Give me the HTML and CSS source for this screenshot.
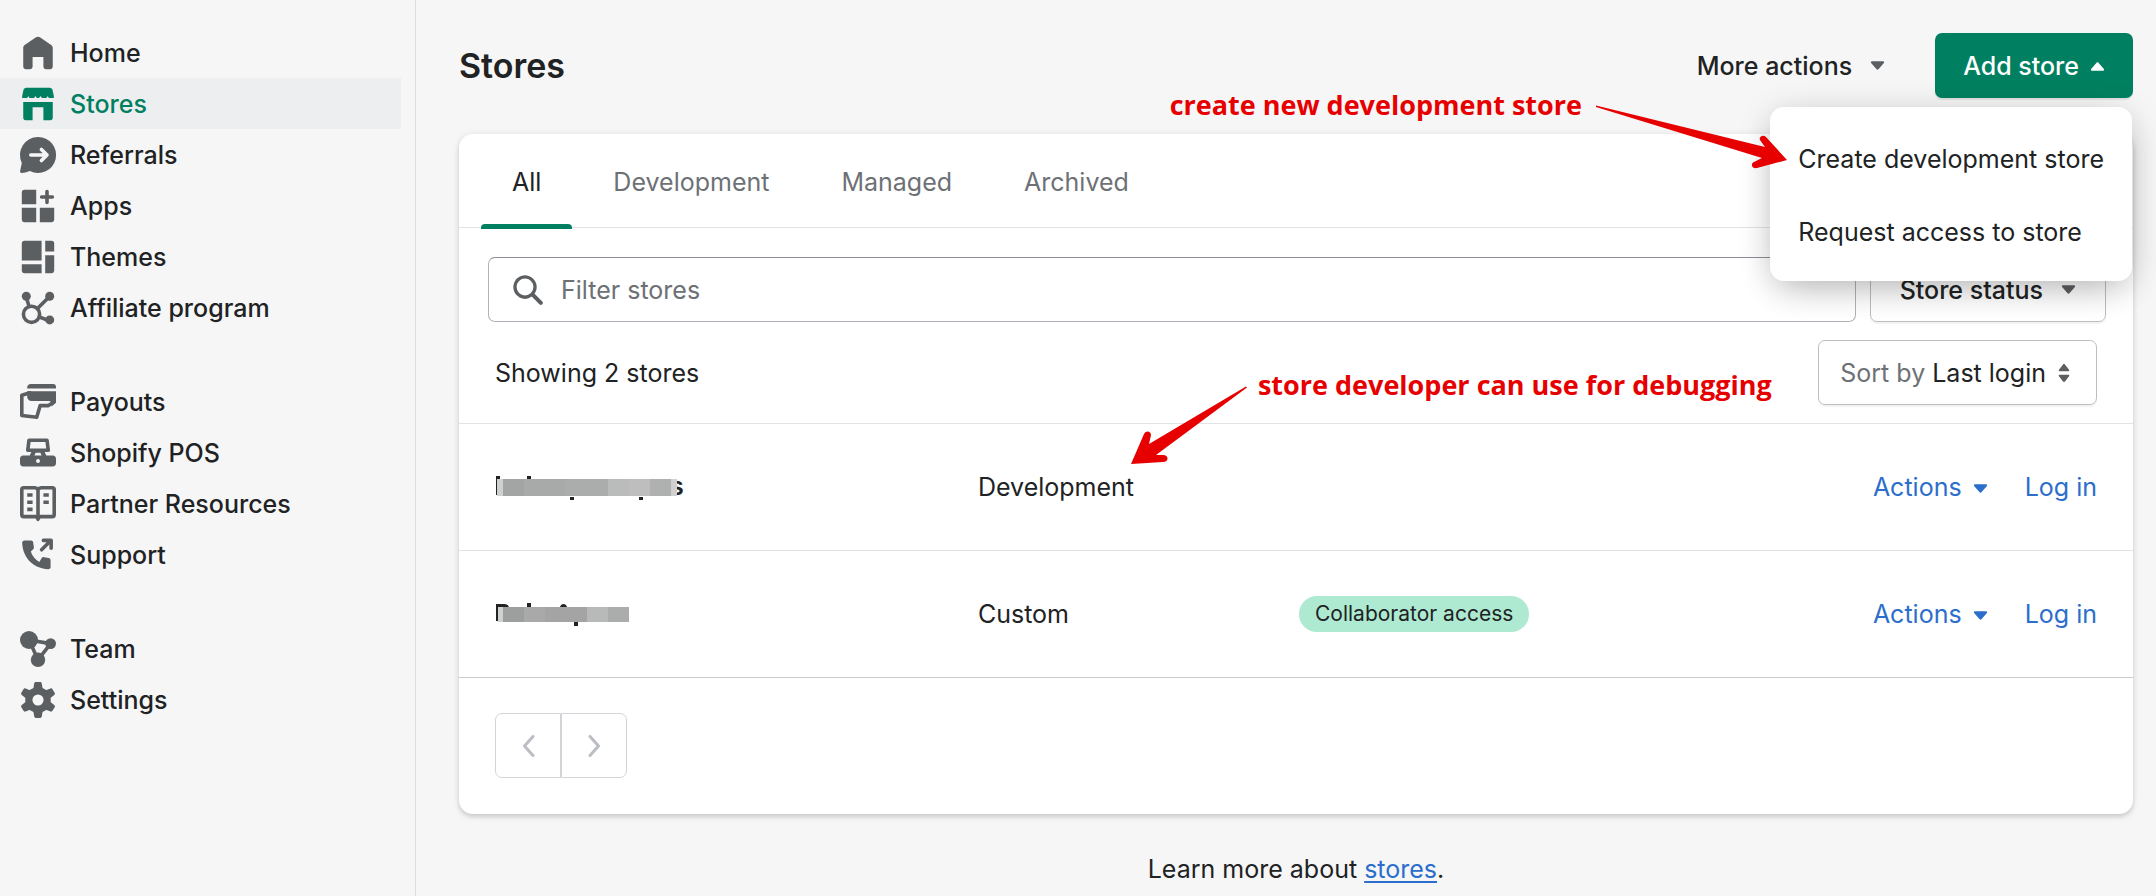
FILE: index.html
```html
<!DOCTYPE html>
<html lang="en">
<head>
  <meta charset="UTF-8">
  <title>Stores</title>
  <link rel="stylesheet" href="styles.css">
</head>
<body>
  <nav class="sidebar">
    <ul>
      <li><a href="#home">
        <svg viewBox="0 0 20 20"><path d="M10 1c.5 0 .9.2 1.300.4l6 4.200c.5.300.9.900.9 1.500v10.400c0 .9-.6 1.500-1.500 1.500h-2.200c-.9 0-1.500-.6-1.500-1.500v-5.300H7v5.300c0 .9-.6 1.500-1.500 1.500H3.300c-.9 0-1.500-.6-1.500-1.500V7.100c0-.6.300-1.200.8-1.500l6.100-4.200c.4-.2.8-.4 1.300-.4z"/></svg>
        Home</a></li>
      <li><a href="#stores" class="active">
        <svg viewBox="0 0 20 20"><path d="M3.500 1h13c.8 0 1.400.5 1.600 1.300l.7 3.200v1.200h-2.200c-.6 0-1-.5-1.200-1.200-.2.700-.7 1.200-1.300 1.200h-1.300c-.6 0-1.100-.5-1.400-1.200-.3.700-.8 1.200-1.400 1.200s-1.100-.5-1.400-1.200c-.3.700-.8 1.200-1.400 1.200H5.900c-.6 0-1.100-.5-1.300-1.200-.2.700-.6 1.200-1.200 1.200H1.200V5.500l.7-3.200C2.100 1.500 2.700 1 3.500 1z"/><path d="M1.800 8.900h16.400v8.800c0 .8-.5 1.300-1.300 1.300H13v-7.200H7V19H3.100c-.8 0-1.300-.5-1.300-1.300z"/></svg>
        Stores</a></li>
      <li><a href="#referrals">
        <svg viewBox="0 0 20 20"><path d="M10 0a10 10 0 1 1-4.500 18.900C3.800 19.500 2.100 20 .9 20 .2 20-.1 19.500.1 18.800l.9-4.400A10 10 0 0 1 10 0z"/><path class="cut" d="M6 10h9M11.900 6.900 15 10l-3.100 3.100"/></svg>
        Referrals</a></li>
      <li><a href="#apps">
        <svg viewBox="0 0 20 20"><path d="M2.500 1H9v8H1V2.500C1 1.600 1.600 1 2.500 1zM1 11h8v8H2.500C1.600 19 1 18.400 1 17.500zM11 11h8v6.500c0 .9-.6 1.500-1.500 1.500H11z"/><path class="line" d="M15 2v6M12 5h6"/></svg>
        Apps</a></li>
      <li><a href="#themes">
        <svg viewBox="0 0 20 20"><path d="M2.500 1H12v11H1V2.500C1 1.600 1.600 1 2.500 1zM14 1h3.500c.9 0 1.500.6 1.500 1.500V7h-5zM1 14h11v5H2.500C1.600 19 1 18.400 1 17.500zM14 9h5v8.500c0 .9-.6 1.500-1.500 1.500H14z"/></svg>
        Themes</a></li>
      <li><a href="#affiliate">
        <svg viewBox="0 0 20 20"><circle class="line" cx="6.400" cy="13.500" r="4.500"/><path class="line" d="M5 9 3.500 4M9.700 10.300 16 4M10.800 15l5.200 2"/><circle cx="3.500" cy="3.500" r="2.500"/><circle cx="16.500" cy="3.500" r="2.500"/><circle cx="16.500" cy="16.600" r="2.500"/></svg>
        Affiliate program</a></li>
    </ul>
    <ul>
      <li><a href="#payouts">
        <svg viewBox="0 0 20 20"><path d="M6 0h12.500c.9 0 1.500.7 1.500 1.500V2.500H4V2c0-1.200.9-2 2-2zM4 4h16v6.400l-2.500 2.100V11c0-.9-.6-1.600-1.500-1.600H6.500C5 9.400 4 8.400 4 7.200z"/><path class="line" d="M5.500 4.900 1 6.300v11.200l8.300 1 1.900-6.500h4.600l2.200-1.400"/></svg>
        Payouts</a></li>
      <li><a href="#pos">
        <svg viewBox="0 0 20 20"><path class="line" d="M5 2.900h10l.7 5.600H4.300z"/><path fill-rule="evenodd" d="M6.500 9h7l1.100 2.400h3.600c1.100 0 1.800.7 1.800 1.800v2.500c0 1.100-.7 1.800-1.800 1.800H1.800C.7 17.500 0 16.800 0 15.700v-2.500c0-1.100.7-1.800 1.800-1.800h3.600zM8.700 9.800 8 11.400h4l-.7-1.600zM10 13.300a1.100 1.100 0 1 0 0 2.200 1.100 1.100 0 0 0 0-2.200z"/></svg>
        Shopify POS</a></li>
      <li><a href="#resources">
        <svg viewBox="0 0 20 20"><path class="line" d="M10 2.200C9.500 1.300 8.800 1 8 1H2C1.400 1 1 1.400 1 2v14c0 .6.400 1 1 1h6.500c.7 0 1.200.6 1.500 1.500.3-.9.8-1.500 1.500-1.500H18c.6 0 1-.4 1-1V2c0-.6-.4-1-1-1h-6c-.8 0-1.500.3-2 1.200zM10 2v16"/><path d="M4 4h3v2H4zM4 8h3v2H4zM4 12h3v2H4zM13 4h3v2h-3zM13 8h3v2h-3z"/></svg>
        Partner Resources</a></li>
      <li><a href="#support">
        <svg viewBox="0 0 20 20"><path d="M2.500 1.900h3.600c.7 0 1.100.4 1.200 1l.4 2.600c.1.600-.1 1-.5 1.400L6 8.100c.8 2.500 2.500 4.600 4.700 5.800l1.300-2.100c.3-.5.800-.7 1.400-.6l2.500.5c.6.100 1.100.6 1.100 1.200v3.800c0 .8-.6 1.300-1.400 1.200C7.800 17.400 1.600 12 1.200 3.300c0-.8.500-1.400 1.300-1.400z"/><path class="line" d="m12 7.100 5-5M13 1.900h4.300v4.300"/></svg>
        Support</a></li>
    </ul>
    <ul>
      <li><a href="#team">
        <svg viewBox="0 0 20 20"><path class="line" d="M5 5l5 11 7-9z"/><circle cx="5" cy="5" r="5"/><circle cx="17" cy="7" r="3"/><circle cx="10" cy="16" r="4"/></svg>
        Team</a></li>
      <li><a href="#settings">
        <svg viewBox="0 0 20 20"><defs><path id="tooth" d="M8.800 0h2.400c.5 0 .8.300.9.800L12.800 5H7.200L7.900.800C8 .3 8.300 0 8.800 0z"/></defs><circle class="ring" cx="10" cy="10" r="5.100"/><use href="#tooth"/><use href="#tooth" transform="rotate(60 10 10)"/><use href="#tooth" transform="rotate(120 10 10)"/><use href="#tooth" transform="rotate(180 10 10)"/><use href="#tooth" transform="rotate(240 10 10)"/><use href="#tooth" transform="rotate(300 10 10)"/></svg>
        Settings</a></li>
    </ul>
  </nav>

  <main>
    <header class="page-header">
      <h1>Stores</h1>
      <div class="page-actions">
        <button type="button" class="plain">More actions <svg class="caret" viewBox="0 0 16 10"><path d="M2 0h12c1 0 1.400 1 .8 1.700L9 8.500c-.6.700-1.400.7-2 0L1.200 1.700C.6 1 1 0 2 0z"/></svg></button>
        <div class="add-store">
          <button type="button" class="primary" aria-expanded="true">Add store <svg class="caret" viewBox="0 0 16 10"><path d="M2 10h12c1 0 1.400-1 .8-1.700L9 1.500c-.6-.7-1.400-.7-2 0L1.200 8.300C.6 9 1 10 2 10z"/></svg></button>
          <div class="menu">
            <a href="#create">Create development store</a>
            <a href="#request">Request access to store</a>
          </div>
          <div class="note note-create">
            <span>create new development store</span>
            <svg width="200" height="72" viewBox="0 0 200 72"><path d="M6 5.500 175 47l-5-7c-1.500-3 3-6 6-3l21 23-30 8c-5 1-7-4-3-6l8-4L6 7z"/></svg>
          </div>
        </div>
      </div>
    </header>

    <section class="card">
      <div class="tabs" role="tablist">
        <button type="button" role="tab" class="tab selected" aria-selected="true">All</button>
        <button type="button" role="tab" class="tab">Development</button>
        <button type="button" role="tab" class="tab">Managed</button>
        <button type="button" role="tab" class="tab">Archived</button>
      </div>

      <div class="filters">
        <label class="search">
          <svg viewBox="0 0 20 20"><path fill-rule="evenodd" d="M8 2.400a5.600 5.600 0 1 0 0 11.200A5.600 5.600 0 0 0 8 2.400zM.2 8a7.800 7.800 0 1 1 14.200 4.500l5.100 5.100a1.300 1.300 0 0 1-1.900 1.900l-5.100-5.100A7.800 7.800 0 0 1 .2 8z"/></svg>
          <input type="text" placeholder="Filter stores" aria-label="Filter stores">
        </label>
        <button type="button" class="status">Store status <svg class="caret" viewBox="0 0 16 10"><path d="M2 0h12c1 0 1.400 1 .8 1.700L9 8.500c-.6.700-1.400.7-2 0L1.200 1.700C.6 1 1 0 2 0z"/></svg></button>
      </div>

      <div class="list-head">
        <span>Showing 2 stores</span>
        <button type="button" class="sort"><span>Sort by</span> Last login <svg viewBox="0 0 12 20"><path d="M6 0c.5 0 .8.200 1.100.5l4.500 6c.5.700.2 1.500-.7 1.500H1.100C.2 8-.1 7.200.4 6.500l4.500-6C5.200.2 5.500 0 6 0zM6 20c.5 0 .8-.2 1.100-.5l4.500-6c.5-.7.2-1.500-.7-1.500H1.100c-.9 0-1.200.8-.7 1.500l4.500 6c.3.300.6.500 1.100.5z"/></svg></button>
      </div>

      <table>
        <tbody>
          <tr>
            <td class="name">
              <svg width="200" height="26" viewBox="0 0 200 26" role="img" aria-label="Hidden store name">
                <path d="M0 2h4v3H2v16H0zM31 2h4v3h-4zM74 23h4v3h-4zM143 23h4v3h-4z"/>
                <text x="174" y="21">s</text>
                <path fill="#d0d0d0" d="M1 5h6v17H1zM175 5h6v17h-6z"/>
                <path fill="#a3a5a4" d="M7 5h21v17H7z"/>
                <path fill="#a8aaa9" d="M28 5h42v17H28z"/>
                <path fill="#abadac" d="M70 5h42v17H70z"/>
                <path fill="#babcbb" d="M112 5h21v17h-21z"/>
                <path fill="#bebebe" d="M133 5h21v17h-21z"/>
                <path fill="#afb1b0" d="M154 5h21v17h-21z"/>
              </svg>
            </td>
            <td class="type">Development
              <div class="note note-debug">
                <svg width="126" height="90" viewBox="0 0 126 90"><path d="M120 5.500 23 63l2-9c0-4-5-5-7-1L5 83l32-2c6 0 6-7 0-7l-7 0L121 6.500z"/></svg>
                <span>store developer can use for debugging</span>
              </div>
            </td>
            <td class="access"></td>
            <td class="row-actions"><button type="button" class="link">Actions <svg class="caret" viewBox="0 0 16 10"><path d="M2 0h12c1 0 1.400 1 .8 1.700L9 8.500c-.6.700-1.400.7-2 0L1.200 1.700C.6 1 1 0 2 0z"/></svg></button> <a href="#login">Log in</a></td>
          </tr>
          <tr>
            <td class="name">
              <svg width="200" height="26" viewBox="0 0 200 26" role="img" aria-label="Hidden store name">
                <path d="M0 3h8c3 0 4 1 5 3H2v14H0zM31 2h4v4h-4zM64 6c1-4 6-4 7 0zM78 20h4v5h-4z"/>
                <path fill="#d0d0d0" d="M2 6h5v15H2z"/>
                <path fill="#9d9f9e" d="M7 6h21v15H7z"/>
                <path fill="#a9a9a9" d="M28 6h21v15H28z"/>
                <path fill="#a4a4a4" d="M49 6h42v15H49z"/>
                <path fill="#b8bab9" d="M91 6h21v15H91z"/>
                <path fill="#abadac" d="M112 6h21v15h-21z"/>
              </svg>
            </td>
            <td class="type">Custom</td>
            <td class="access"><span class="badge">Collaborator access</span></td>
            <td class="row-actions"><button type="button" class="link">Actions <svg class="caret" viewBox="0 0 16 10"><path d="M2 0h12c1 0 1.400 1 .8 1.700L9 8.500c-.6.700-1.400.7-2 0L1.200 1.700C.6 1 1 0 2 0z"/></svg></button> <a href="#login">Log in</a></td>
          </tr>
        </tbody>
      </table>

      <div class="pagination">
        <button type="button" aria-label="Previous" disabled><svg viewBox="0 0 12 22"><path d="M10.500 1.500 2 11l8.500 9.500"/></svg></button>
        <button type="button" aria-label="Next" disabled><svg viewBox="0 0 12 22"><path d="M1.500 1.500 10 11l-8.500 9.500"/></svg></button>
      </div>
    </section>

    <p class="help">Learn more about <a href="#docs">stores</a>.</p>
  </main>
</body>
</html>
```
FILE: styles.css
```css
* { box-sizing: border-box; }
body { margin: 0; display: flex; min-height: 100vh; background: #f6f6f7; color: #202223; font: 25px/32px Inter, "Liberation Sans", sans-serif; }
button { font: inherit; color: inherit; background: none; border: none; padding: 0; cursor: pointer; white-space: nowrap; }
a { color: #2c6ecb; text-decoration: none; }
svg { flex: none; fill: currentColor; }

.sidebar { flex: none; width: 416px; padding: 27px 14px 0 0; border-right: 1px solid #dcdee0; }
.sidebar ul { list-style: none; margin: 0 0 43px; padding: 0; }
.sidebar a { display: flex; align-items: center; gap: 14px; height: 51px; padding-left: 20px; color: #202223; font-weight: 500; }
.sidebar svg { width: 36px; height: 36px; color: #5c5f62; overflow: visible; }
.sidebar .active { background: #edeeef; color: #008060; }
.sidebar .active svg { color: #008060; }
.line { fill: none; stroke: currentColor; stroke-width: 2; stroke-linecap: round; stroke-linejoin: round; }
.cut { fill: none; stroke: #f6f6f7; stroke-width: 2; stroke-linecap: round; stroke-linejoin: round; }
.ring { fill: none; stroke: currentColor; stroke-width: 4; }

main { flex: 1; min-width: 0; padding: 33px 23px 0 43px; }
.page-header { display: flex; justify-content: space-between; align-items: center; margin-bottom: 36px; }
h1 { margin: 0; font-size: 34px; line-height: 40px; font-weight: 600; }
.page-actions { display: flex; align-items: center; gap: 50px; }
.page-actions button { display: flex; align-items: center; font-weight: 500; }
.caret { width: 15px; height: 10px; }
.plain { gap: 18px; }
.plain .caret, .status .caret { color: #5c5f62; }
.add-store { position: relative; }
.add-store .primary { gap: 11px; height: 65px; padding: 0 28px; border-radius: 7px; background: #008060; color: #fff; box-shadow: 0 2px 1px rgba(0, 0, 0, 0.08); }
.menu { position: absolute; z-index: 2; top: 74px; right: 1px; padding: 15px 14px 13px; border-radius: 14px; background: #fff; box-shadow: 0 5px 36px -4px rgba(23, 24, 24, 0.2), 0 14px 36px -10px rgba(0, 0, 0, 0.2); }
.menu a { display: flex; align-items: center; height: 73px; padding: 0 14px; color: #202223; white-space: nowrap; }

.card { border-radius: 14px; background: #fff; box-shadow: 0 0 9px rgba(23, 24, 24, 0.06), 0 3px 5px rgba(0, 0, 0, 0.15); }
.tabs { display: flex; gap: 10px; height: 94px; padding: 0 22px; border-bottom: 1px solid #e1e3e5; }
.tab { position: relative; padding: 3px 31px 0; color: #6d7175; }
.tab.selected { color: #202223; }
.tab.selected::after { content: ""; position: absolute; left: 0; right: 0; bottom: -2px; height: 5px; border-radius: 4px 4px 0 0; background: #008060; }
.filters { display: flex; gap: 14px; padding: 29px 27px 18px 29px; }
.search { flex: 1; display: flex; align-items: center; gap: 18px; height: 65px; padding: 0 24px; border: 1px solid #aeb4b9; border-top-color: #898f94; border-radius: 7px; }
.search svg { width: 30px; height: 30px; color: #5c5f62; }
.search input { flex: 1; min-width: 0; padding: 0; border: none; outline: none; background: none; font: inherit; }
.search input::placeholder { color: #6d7175; opacity: 1; }
.status { display: flex; align-items: center; gap: 18px; height: 65px; padding: 0 29px; border: 1px solid #babfc3; border-radius: 7px; font-weight: 500; box-shadow: 0 2px 1px rgba(0, 0, 0, 0.05); }
.list-head { display: flex; justify-content: space-between; align-items: center; padding: 0 36px 18px; }
.sort { display: flex; align-items: center; gap: 7px; height: 65px; padding: 0 26px 0 21px; border: 1px solid #babfc3; border-radius: 7px; box-shadow: 0 2px 1px rgba(0, 0, 0, 0.05); }
.sort span { color: #6d7175; }
.sort svg { width: 12px; height: 18px; margin-left: 5px; color: #5c5f62; }

table { width: 100%; table-layout: fixed; border-collapse: collapse; }
td { height: 127px; padding: 0; border-top: 1px solid #e1e3e5; vertical-align: middle; }
tr:last-child td { border-bottom: 1px solid #c9cccf; }
.name { width: 31%; padding-left: 37px; }
.name svg { display: block; }
.name text { font-weight: 600; }
.type { position: relative; width: 19%; }
.access { padding-left: 3px; }
.badge { display: inline-block; padding: 2px 16px; border-radius: 18px; background: #aee9d1; font-size: 21px; }
.row-actions { padding-right: 36px; text-align: right; color: #2c6ecb; }
.link { margin-right: 30px; }
.link .caret { margin: 0 0 2px 4px; }

.pagination { display: flex; padding: 35px 36px 36px; }
.pagination button { display: flex; align-items: center; justify-content: center; width: 66px; height: 65px; border: 1px solid #d2d5d8; border-radius: 7px 0 0 7px; }
.pagination button + button { border-radius: 0 7px 7px 0; }
.pagination svg { width: 13px; height: 22px; fill: none; stroke: #babec3; stroke-width: 3; stroke-linecap: round; stroke-linejoin: round; }

.help { margin: 39px 0 0; text-align: center; }
.help a { text-decoration: underline; text-decoration-thickness: 2px; text-underline-offset: 3px; }

/* red annotations over the page */
.note { position: absolute; z-index: 3; display: flex; color: #e60000; font: 700 27px/32px "Open Sans", sans-serif; white-space: nowrap; pointer-events: none; }
.note-create { top: 56px; right: 343px; gap: 8px; }
.note-create svg { margin-top: 11px; }
.note-debug { left: 148px; bottom: 79px; gap: 6px; }
.note-debug svg { margin-top: 12px; }
```
